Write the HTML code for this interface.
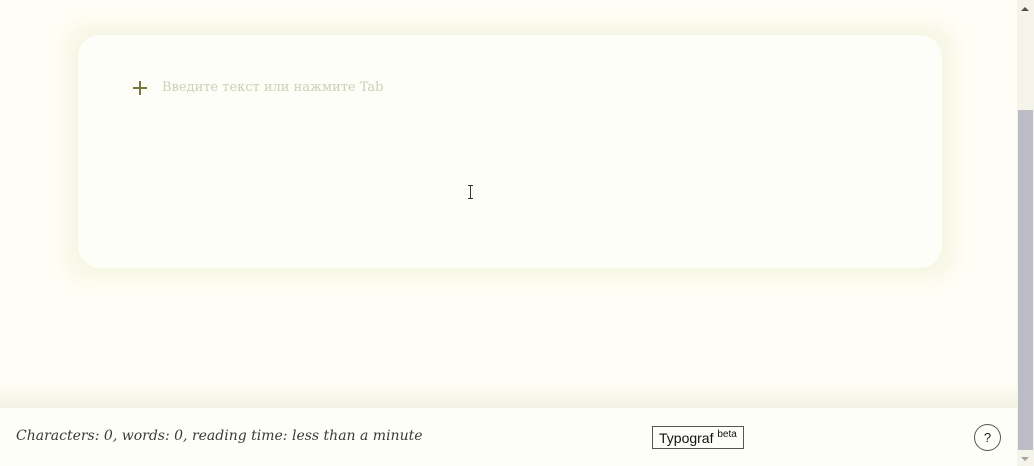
<!DOCTYPE html>
<html><head><meta charset="utf-8"><style>
html,body{margin:0;padding:0;width:1034px;height:466px;overflow:hidden;background:#fefef6;font-family:"DejaVu Serif",serif;}
.main{position:absolute;left:0;top:0;width:1017px;height:466px;background:#fefef6;}
.glow{position:absolute;left:62px;top:20px;width:896px;height:264px;border-radius:30px;background:#f9f9ea;filter:blur(5px);}
.card{position:absolute;left:78px;top:35px;width:864px;height:233px;border-radius:22px;background:#fefef9;box-shadow:0 0 5px 3px #f6f6e4;}
.plus{position:absolute;left:133px;top:81px;width:14px;height:14px;}
.plus:before{content:"";position:absolute;left:6px;top:0;width:2px;height:14px;background:#77773a;}
.plus:after{content:"";position:absolute;left:0;top:6px;width:14px;height:2px;background:#77773a;}
.ph{position:absolute;left:162px;top:80px;font-size:13px;color:#cfcfb4;}
.cursor{position:absolute;left:470px;top:185px;width:1px;height:14px;background:#333;}
.cursor:before,.cursor:after{content:"";position:absolute;left:-2px;width:5px;height:1px;background:#333;}
.cursor:before{top:0}.cursor:after{bottom:0}
.fshadow{position:absolute;left:0;top:384px;width:1017px;height:24px;background:linear-gradient(#fefef6,#f1f1e2);}
.footer{position:absolute;left:0;top:408px;width:1017px;height:58px;background:#fefef8;}
.stats{position:absolute;left:16px;top:20px;font-style:italic;font-size:14px;color:#3a3a3a;}
.typo{position:absolute;left:652px;top:18px;width:90px;height:21px;border:1px solid #555;box-sizing:content-box;padding:0;font-family:"Liberation Sans",sans-serif;font-size:14px;color:#111;line-height:22px;text-indent:6px;white-space:nowrap;}
.typo sup{font-size:10px;vertical-align:6px;line-height:0}
.help{position:absolute;left:974px;top:16px;width:25px;height:25px;border:1px solid #555;border-radius:50%;text-align:center;line-height:25px;font-family:"Liberation Sans",sans-serif;font-size:13px;color:#222;}
.sb{position:absolute;left:1017px;top:0;width:17px;height:466px;background:#f4f4ea;}
.thumb{position:absolute;left:1px;top:110px;width:15px;height:340px;background:#bcbcc6;}
.ar{position:absolute;left:4px;width:0;height:0;border-left:4px solid transparent;border-right:4px solid transparent;}
.up{top:7px;border-bottom:4px solid #505050}
.dn{bottom:5px;border-top:4px solid #a3a3a3}
</style></head><body>
<div class="main">
<div class="glow"></div>
<div class="card"></div>
<div class="plus"></div>
<div class="ph">Введите текст или нажмите Tab</div>
<div class="cursor"></div>
<div class="fshadow"></div>
<div class="footer">
<div class="stats">Characters: 0, words: 0, reading time: less than a minute</div>
<div class="typo">Typograf <sup>beta</sup></div>
<div class="help">?</div>
</div>
</div>
<div class="sb"><div class="ar up"></div><div class="thumb"></div><div class="ar dn"></div></div>
</body></html>
